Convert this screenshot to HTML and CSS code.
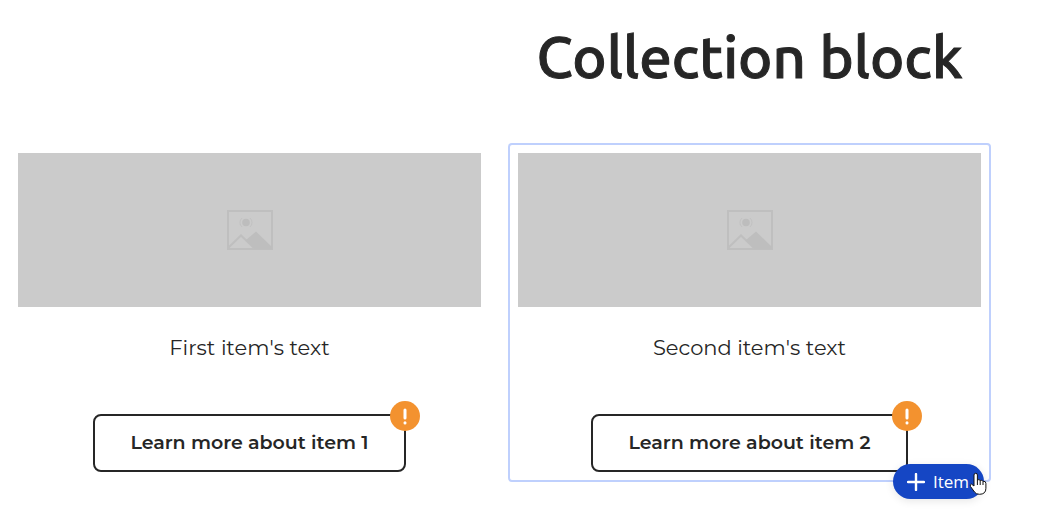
FILE: index.html
```
<!DOCTYPE html>
<html lang="en">

<head>
    <meta charset="UTF-8" />
    <meta name="viewport" content="width=device-width, initial-scale=1.0" />
    <title>Collection block</title>
    <link rel="stylesheet" href="styles.css">
</head>

<body>
    <main class="collection">
        <h1 class="title">Collection block</h1>

        <article class="item">
            <div class="picture">
                <svg width="46" height="40" viewBox="0 0 46 40" aria-hidden="true">
                    <rect x="1" y="1" width="44" height="38" fill="none" stroke="#bfbfbf" stroke-width="2" />
                    <circle cx="19" cy="12.500" r="3.800" fill="#bdbdbd" />
                    <path d="M15 8a6 6 0 0 0 0 9M23 8a6 6 0 0 1 0 9" fill="none" stroke="#c2c2c2" />
                    <path d="M1 38 14 25.500 27 38" fill="none" stroke="#bfbfbf" stroke-width="2" />
                    <path d="M19 30 29 21.500 45 37v2H28Z" fill="#bebebe" />
                </svg>
            </div>
            <p class="text">First item's text</p>
            <div class="action">
                <button class="learn" type="button">Learn more about item 1</button>
                <span class="badge">
                    <svg width="30" height="30" viewBox="0 0 30 30" aria-hidden="true">
                        <path d="M15 9v8M15 21.800v.1" fill="none" stroke="#fff" stroke-width="3" stroke-linecap="round" />
                    </svg>
                </span>
            </div>
        </article>

        <article class="item selected">
            <div class="picture">
                <svg width="46" height="40" viewBox="0 0 46 40" aria-hidden="true">
                    <rect x="1" y="1" width="44" height="38" fill="none" stroke="#bfbfbf" stroke-width="2" />
                    <circle cx="19" cy="12.500" r="3.800" fill="#bdbdbd" />
                    <path d="M15 8a6 6 0 0 0 0 9M23 8a6 6 0 0 1 0 9" fill="none" stroke="#c2c2c2" />
                    <path d="M1 38 14 25.500 27 38" fill="none" stroke="#bfbfbf" stroke-width="2" />
                    <path d="M19 30 29 21.500 45 37v2H28Z" fill="#bebebe" />
                </svg>
            </div>
            <p class="text">Second item's text</p>
            <div class="action">
                <button class="learn" type="button">Learn more about item 2</button>
                <span class="badge">
                    <svg width="30" height="30" viewBox="0 0 30 30" aria-hidden="true">
                        <path d="M15 9v8M15 21.800v.1" fill="none" stroke="#fff" stroke-width="3" stroke-linecap="round" />
                    </svg>
                </span>
            </div>
            <button class="add" type="button">
                <svg width="18" height="18" viewBox="0 0 18 18" aria-hidden="true">
                    <path d="M9 1v16M1 9h16" fill="none" stroke="#fff" stroke-width="2.400" stroke-linecap="round" />
                </svg>
                Item
            </button>
            <svg class="pointer" width="18" height="24" viewBox="0 0 18 24" aria-hidden="true">
                <path d="M5 14V3a1.700 1.700 0 0 1 3.400 0v5q1.600-1 2.800.5 1.600-.6 2.800.8 2.900-.4 2.900 2v5q0 6-6.500 6Q7 22.300 5.500 20L1.500 14.500q-1-2 1-2.400Z" fill="#fff" stroke="#111" stroke-linejoin="round" />
                <path d="M8.400 8v5M11.200 9v4M14 9.800V13" fill="none" stroke="#111" />
            </svg>
        </article>
    </main>
</body>

</html>
```
FILE: styles.css
```
body {
    margin: 0;
    background-color: #fff;
    font-family: Montserrat, Inter, sans-serif;
    color: #262626;
}

/* the title sits above the second column */
.collection {
    display: grid;
    grid-template-columns: 1fr 1fr;
    column-gap: 17px;
    padding: 22px 47px 50px 8px;
}

.title {
    grid-column: 2;
    margin: 0 0 51px;
    font-family: Ubuntu, "Noto Sans", sans-serif;
    font-size: 58px;
    font-weight: 500;
    line-height: 70px;
    text-align: center;
    white-space: nowrap;
    -webkit-text-stroke: 1px #262626;
}

.item {
    position: relative;
    padding: 8px;
    border: 2px solid transparent;
    border-radius: 4px;
    text-align: center;
}

.item.selected {
    border-color: #bfd0fd;
}

.picture {
    display: flex;
    align-items: center;
    justify-content: center;
    height: 154px;
    background-color: #cbcbcb;
}

.text {
    margin: 24px 0 49px;
    font-size: 21px;
    font-weight: 400;
    line-height: 34px;
}

.action {
    position: relative;
    width: fit-content;
    margin: 0 auto;
}

.learn {
    display: block;
    padding: 16px 35px;
    border: 2px solid #262626;
    border-radius: 8px;
    background-color: #fff;
    color: inherit;
    font-family: inherit;
    font-size: 19px;
    font-weight: 600;
    line-height: 22px;
}

.badge {
    position: absolute;
    top: -13px;
    right: -14px;
    width: 30px;
    height: 30px;
    border-radius: 50%;
    background-color: #f3922f;
}

.badge svg {
    display: block;
}

.add {
    position: absolute;
    right: 5px;
    bottom: -19px;
    display: flex;
    align-items: center;
    gap: 8px;
    height: 35px;
    padding: 0 15px 0 14px;
    border: 0;
    border-radius: 18px;
    background-color: #1546c4;
    box-shadow: 0 2px 8px rgba(0, 0, 0, 0.1);
    color: #fff;
    font-family: "Segoe UI", "Open Sans", sans-serif;
    font-size: 17px;
}

.pointer {
    position: absolute;
    right: 2px;
    bottom: -16px;
}
```
